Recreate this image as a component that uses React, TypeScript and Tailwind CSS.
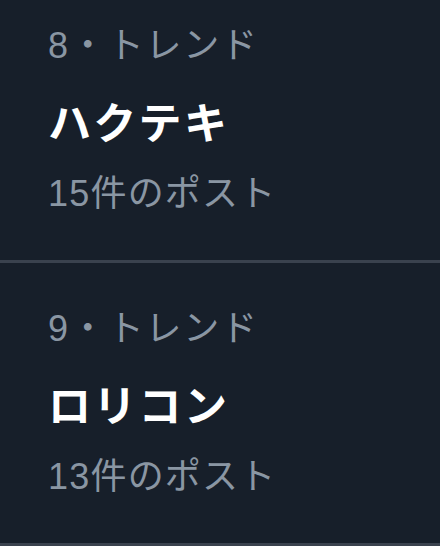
import React from 'react';

const TRENDS = [
  { rank: 8, title: 'ハクテキ', posts: 15 },
  { rank: 9, title: 'ロリコン', posts: 13 },
] as const;

const FONT = "font-['Liberation_Sans','Noto_Sans_CJK_JP',sans-serif]";

function TrendRow({ rank, title, posts }: { rank: number; title: string; posts: number }) {
  return (
    <div className="h-[283px] border-b-[3px] border-[#3a424e] pl-[48px] pt-[42px]">
      <div className="text-[36px] leading-[48px] text-[#8a96a3] tracking-[1.8px]">
        {rank}・トレンド
      </div>
      <div className="mt-[26px] text-[43px] leading-[56px] font-bold text-white tracking-[2.3px]">
        {title}
      </div>
      <div className="mt-[18px] text-[36px] leading-[48px] text-[#8a96a3] tracking-[1.2px]">
        {posts}件のポスト
      </div>
    </div>
  );
}

export default function App() {
  return (
    <div className={`w-[440px] h-[546px] overflow-hidden bg-[#171f2a] ${FONT}`}>
      <div className="-mt-[20px]">
        {TRENDS.map((t) => (
          <TrendRow key={t.rank} {...t} />
        ))}
      </div>
    </div>
  );
}
